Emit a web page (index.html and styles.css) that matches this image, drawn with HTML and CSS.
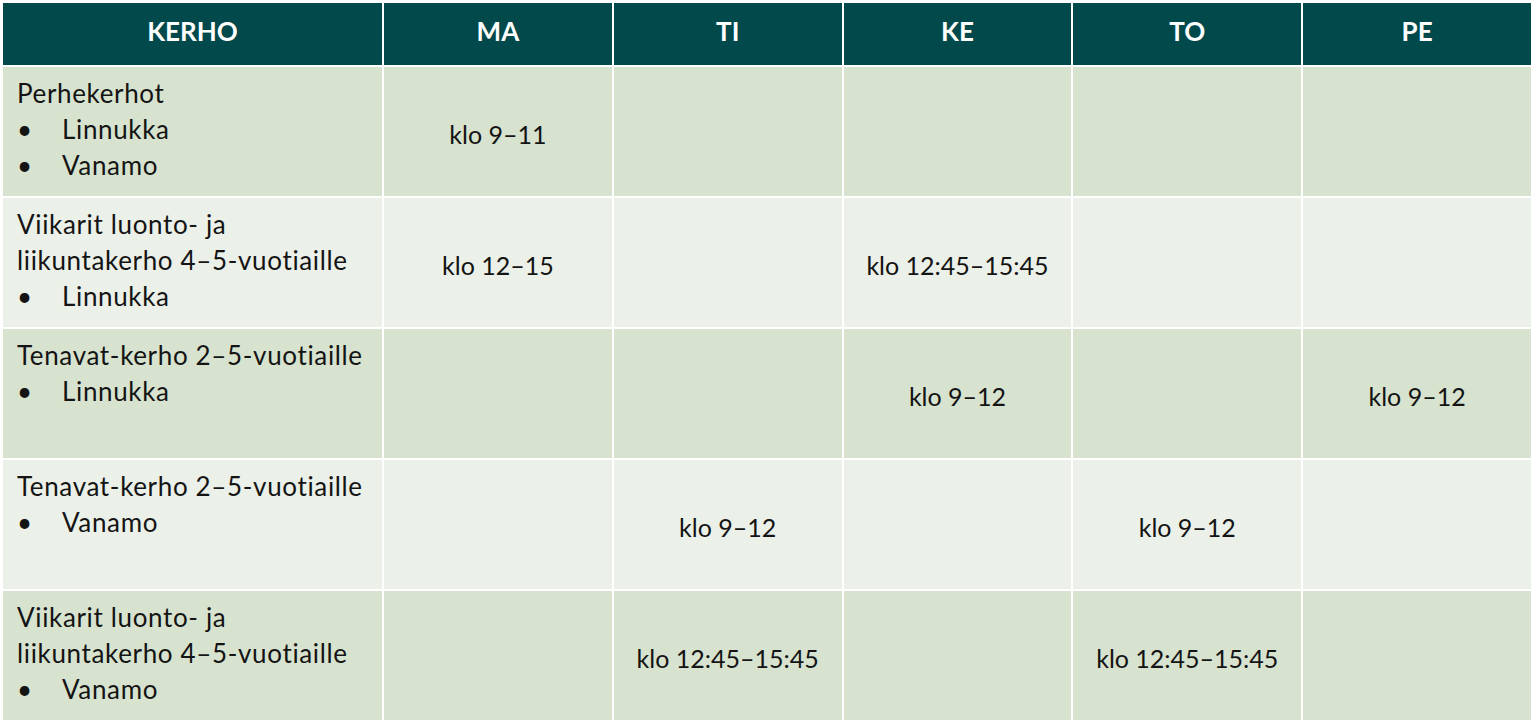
FILE: index.html
```html
<!DOCTYPE html>
<html lang="fi">
<head>
<meta charset="utf-8">
<link rel="stylesheet" href="styles.css">
<title>Kerhot</title>
</head>
<body>
<div class="table">
  <div class="th">KERHO</div>
  <div class="th">MA</div>
  <div class="th">TI</div>
  <div class="th">KE</div>
  <div class="th">TO</div>
  <div class="th">PE</div>

  <div class="td name odd"><div>Perhekerhot</div><ul><li>Linnukka</li><li>Vanamo</li></ul></div>
  <div class="td time odd">klo 9–11</div>
  <div class="td time odd"></div>
  <div class="td time odd"></div>
  <div class="td time odd"></div>
  <div class="td time odd"></div>

  <div class="td name even"><div>Viikarit luonto- ja<br>liikuntakerho 4–5-vuotiaille</div><ul><li>Linnukka</li></ul></div>
  <div class="td time even">klo 12–15</div>
  <div class="td time even"></div>
  <div class="td time even">klo 12:45–15:45</div>
  <div class="td time even"></div>
  <div class="td time even"></div>

  <div class="td name odd"><div>Tenavat-kerho 2–5-vuotiaille</div><ul><li>Linnukka</li></ul></div>
  <div class="td time odd"></div>
  <div class="td time odd"></div>
  <div class="td time odd">klo 9–12</div>
  <div class="td time odd"></div>
  <div class="td time odd">klo 9–12</div>

  <div class="td name even"><div>Tenavat-kerho 2–5-vuotiaille</div><ul><li>Vanamo</li></ul></div>
  <div class="td time even"></div>
  <div class="td time even">klo 9–12</div>
  <div class="td time even"></div>
  <div class="td time even">klo 9–12</div>
  <div class="td time even"></div>

  <div class="td name odd"><div>Viikarit luonto- ja<br>liikuntakerho 4–5-vuotiaille</div><ul><li>Vanamo</li></ul></div>
  <div class="td time odd"></div>
  <div class="td time odd">klo 12:45–15:45</div>
  <div class="td time odd"></div>
  <div class="td time odd">klo 12:45–15:45</div>
  <div class="td time odd"></div>
</div>
</body>
</html>
```

FILE: styles.css
```css
html, body {
  margin: 0;
  padding: 0;
  background: #ffffff;
}
body {
  padding: 3px 5px 0 3px;
  font-family: Lato, "Open Sans", sans-serif;
  color: #141414;
}
.table {
  display: grid;
  grid-template-columns: 379px repeat(5, 1fr);
  grid-template-rows: 62px repeat(5, 129px);
  gap: 2px;
  width: 1528px;
}
.th {
  background: #02494b;
  color: #ffffff;
  font-weight: 700;
  font-size: 26px;
  display: flex;
  justify-content: center;
  padding-top: 12px;
  box-sizing: border-box;
}
.td {
  line-height: 36px;
  box-sizing: border-box;
}
.odd { background: #d7e3cf; }
.even { background: #ebf0e8; }
.name {
  font-size: 26px;
  letter-spacing: 0.65px;
  padding: 8px 4px 0 14px;
}
.name ul {
  margin: 0;
  padding: 0;
  list-style: none;
}
.name li {
  position: relative;
  padding-left: 45px;
}
.name li::before {
  content: "•";
  position: absolute;
  left: 0;
}
.time {
  font-size: 25px;
  display: flex;
  align-items: center;
  justify-content: center;
  padding-top: 4px;
}
```
